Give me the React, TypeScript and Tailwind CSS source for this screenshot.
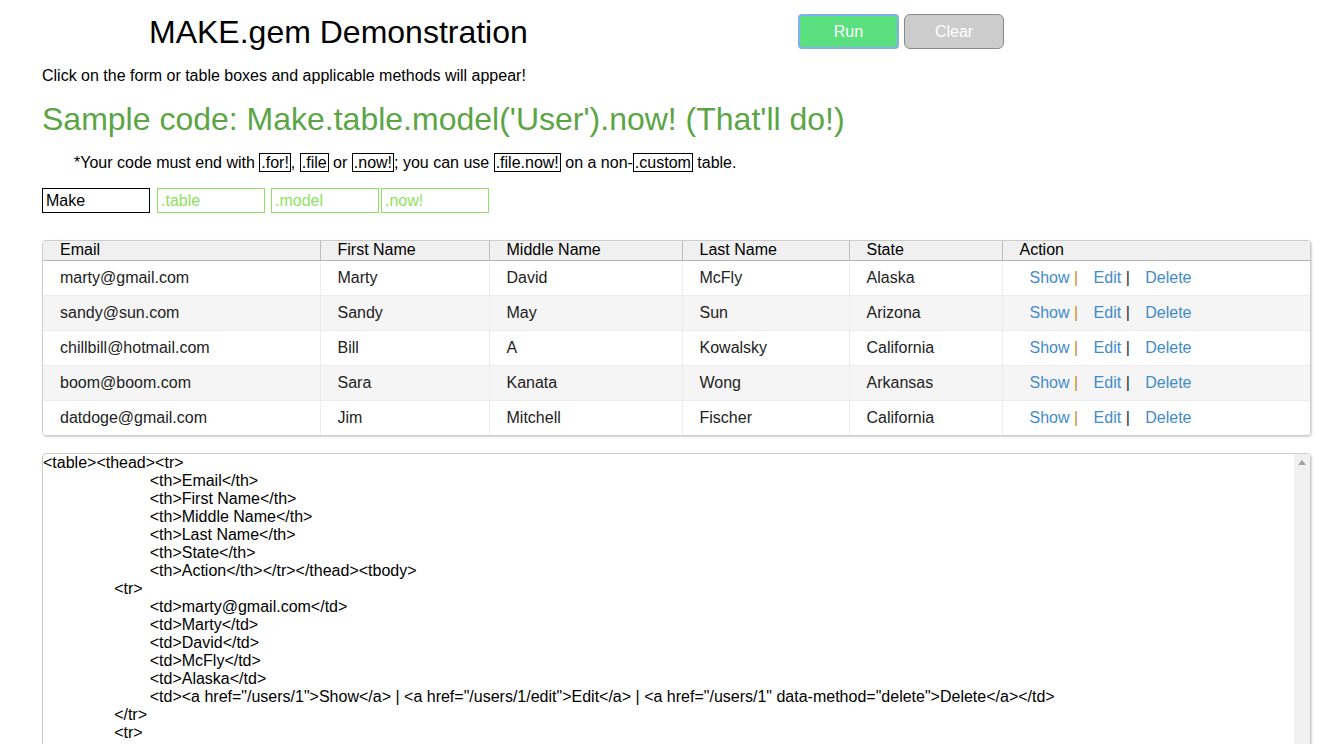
import React from 'react';

const headers = ['Email', 'First Name', 'Middle Name', 'Last Name', 'State', 'Action'];

const users = [
  { email: 'marty@gmail.com', first: 'Marty', middle: 'David', last: 'McFly', state: 'Alaska' },
  { email: 'sandy@sun.com', first: 'Sandy', middle: 'May', last: 'Sun', state: 'Arizona' },
  { email: 'chillbill@hotmail.com', first: 'Bill', middle: 'A', last: 'Kowalsky', state: 'California' },
  { email: 'boom@boom.com', first: 'Sara', middle: 'Kanata', last: 'Wong', state: 'Arkansas' },
  { email: 'datdoge@gmail.com', first: 'Jim', middle: 'Mitchell', last: 'Fischer', state: 'California' },
];

const colWidths = ['w-[277px]', 'w-[169px]', 'w-[193px]', 'w-[167px]', 'w-[153px]', 'w-[308px]'];

// builds the html that the generator spits out for the table above
const buildCode = () => {
  let s = '<table><thead><tr>\n';
  s += headers.map((h) => `\t\t\t<th>${h}</th>`).join('\n') + '</tr></thead><tbody>\n';
  users.forEach((u, i) => {
    const id = i + 1;
    s += '\t\t<tr>\n';
    [u.email, u.first, u.middle, u.last, u.state].forEach((v) => {
      s += `\t\t\t<td>${v}</td>\n`;
    });
    s += `\t\t\t<td><a href="/users/${id}">Show</a> | <a href="/users/${id}/edit">Edit</a> | <a href="/users/${id}" data-method="delete">Delete</a></td>\n`;
    s += '\t\t</tr>\n';
  });
  s += '</tbody></table>';
  return s;
};

const Boxed: React.FC<{ children: React.ReactNode }> = ({ children }) => (
  <span className="border border-black px-[1px]">{children}</span>
);

const App: React.FC = () => {
  return (
    <div
      className="h-[744px] overflow-hidden bg-white text-black"
      style={{ fontFamily: '"Liberation Sans", Arial, sans-serif' }}
    >
      <header className="flex h-[63px] items-center">
        <h1 className="w-[650px] pl-[149px] text-[32px] leading-[36px] font-normal">MAKE.gem Demonstration</h1>
        <div className="ml-[148px] flex gap-[5px]">
          <button className="h-[35px] w-[101px] rounded-[4px] border-2 border-[#86adf2] bg-[#5ae07e] text-[16px] text-white">
            Run
          </button>
          <button className="h-[35px] w-[100px] rounded-[6px] border border-[#8a8a8a] bg-[#cccccc] text-[16px] text-white">
            Clear
          </button>
        </div>
      </header>

      <div className="pl-[42px] pr-[28px]">
        <p className="text-[16px] leading-[25px]">Click on the form or table boxes and applicable methods will appear!</p>

        <h2 className="mt-[13px] text-[32px] leading-[36px] text-[#5ba545]">
          Sample code: Make.table.model('User').now! (That'll do!)
        </h2>

        <p className="mt-[16px] pl-[32px] text-[16px] leading-[20px]">
          *Your code must end with <Boxed>.for!</Boxed>, <Boxed>.file</Boxed> or <Boxed>.now!</Boxed>; you can use{' '}
          <Boxed>.file.now!</Boxed> on a non-<Boxed>.custom</Boxed> table.
        </p>

        <div className="mt-[15px] flex">
          <input
            readOnly
            value="Make"
            className="h-[25px] w-[108px] border border-black px-[3px] text-[16px] text-black outline-none"
          />
          <input
            readOnly
            placeholder=".table"
            className="ml-[7px] h-[25px] w-[108px] border border-[#8ee25f] px-[3px] text-[16px] outline-none placeholder:text-[#8ee25f]"
          />
          <input
            readOnly
            placeholder=".model"
            className="ml-[6px] h-[25px] w-[108px] border border-[#8ee25f] px-[3px] text-[16px] outline-none placeholder:text-[#8ee25f]"
          />
          <input
            readOnly
            placeholder=".now!"
            className="ml-[2px] h-[25px] w-[108px] border border-[#8ee25f] px-[3px] text-[16px] outline-none placeholder:text-[#8ee25f]"
          />
        </div>

        <div className="mt-[27px] overflow-hidden rounded-[4px] border border-[#cccccc] shadow-[1px_1px_2px_rgba(0,0,0,0.18)]">
          <table className="w-full table-fixed border-collapse text-[16px]">
            <colgroup>
              {colWidths.map((w, i) => (
                <col key={i} className={w} />
              ))}
            </colgroup>
            <thead>
              <tr className="h-[19px] border-b border-[#b4b4b4] bg-[#f0f0f0]">
                {headers.map((h, i) => (
                  <th
                    key={h}
                    className={`pl-[17px] text-left text-[16px] leading-[18px] font-normal ${
                      i > 0 ? 'border-l border-[#bdbdbd]' : ''
                    }`}
                  >
                    {h}
                  </th>
                ))}
              </tr>
            </thead>
            <tbody>
              {users.map((u, i) => (
                <tr
                  key={u.email}
                  className={`h-[35px] text-[#222] ${i % 2 === 1 ? 'bg-[#f5f5f5]' : 'bg-white'} ${
                    i > 0 ? 'border-t border-[#ececec]' : ''
                  }`}
                >
                  {[u.email, u.first, u.middle, u.last, u.state].map((v, j) => (
                    <td key={j} className={`pl-[17px] ${j > 0 ? 'border-l border-[#ececec]' : ''}`}>
                      {v}
                    </td>
                  ))}
                  <td className="border-l border-[#ececec] pl-[17px]">
                    <a className="pl-[10px] text-[#428bca]">Show</a> <span className="text-[#c98a24]">|</span>{' '}
                    <a className="pl-[11px] text-[#428bca]">Edit</a> <span className="text-[#1b2b40]">|</span>{' '}
                    <a className="pl-[11px] text-[#428bca]">Delete</a>
                  </td>
                </tr>
              ))}
            </tbody>
          </table>
        </div>

        <div className="mt-[17px] flex h-[420px] overflow-hidden rounded-[4px] border border-[#cccccc] shadow-[1px_1px_2px_rgba(0,0,0,0.18)]">
          <div className="flex-1 overflow-hidden whitespace-pre text-[16px] leading-[18px] text-black [tab-size:8]">
            {buildCode()}
          </div>
          <div className="flex w-[16px] justify-center bg-[#f1f1f1] pt-[6px]">
            <svg width="8" height="5" viewBox="0 0 8 5">
              <path d="M0 5 L4 0 L8 5 Z" fill="#a3a3a3" />
            </svg>
          </div>
        </div>
      </div>
    </div>
  );
};

export default App;
